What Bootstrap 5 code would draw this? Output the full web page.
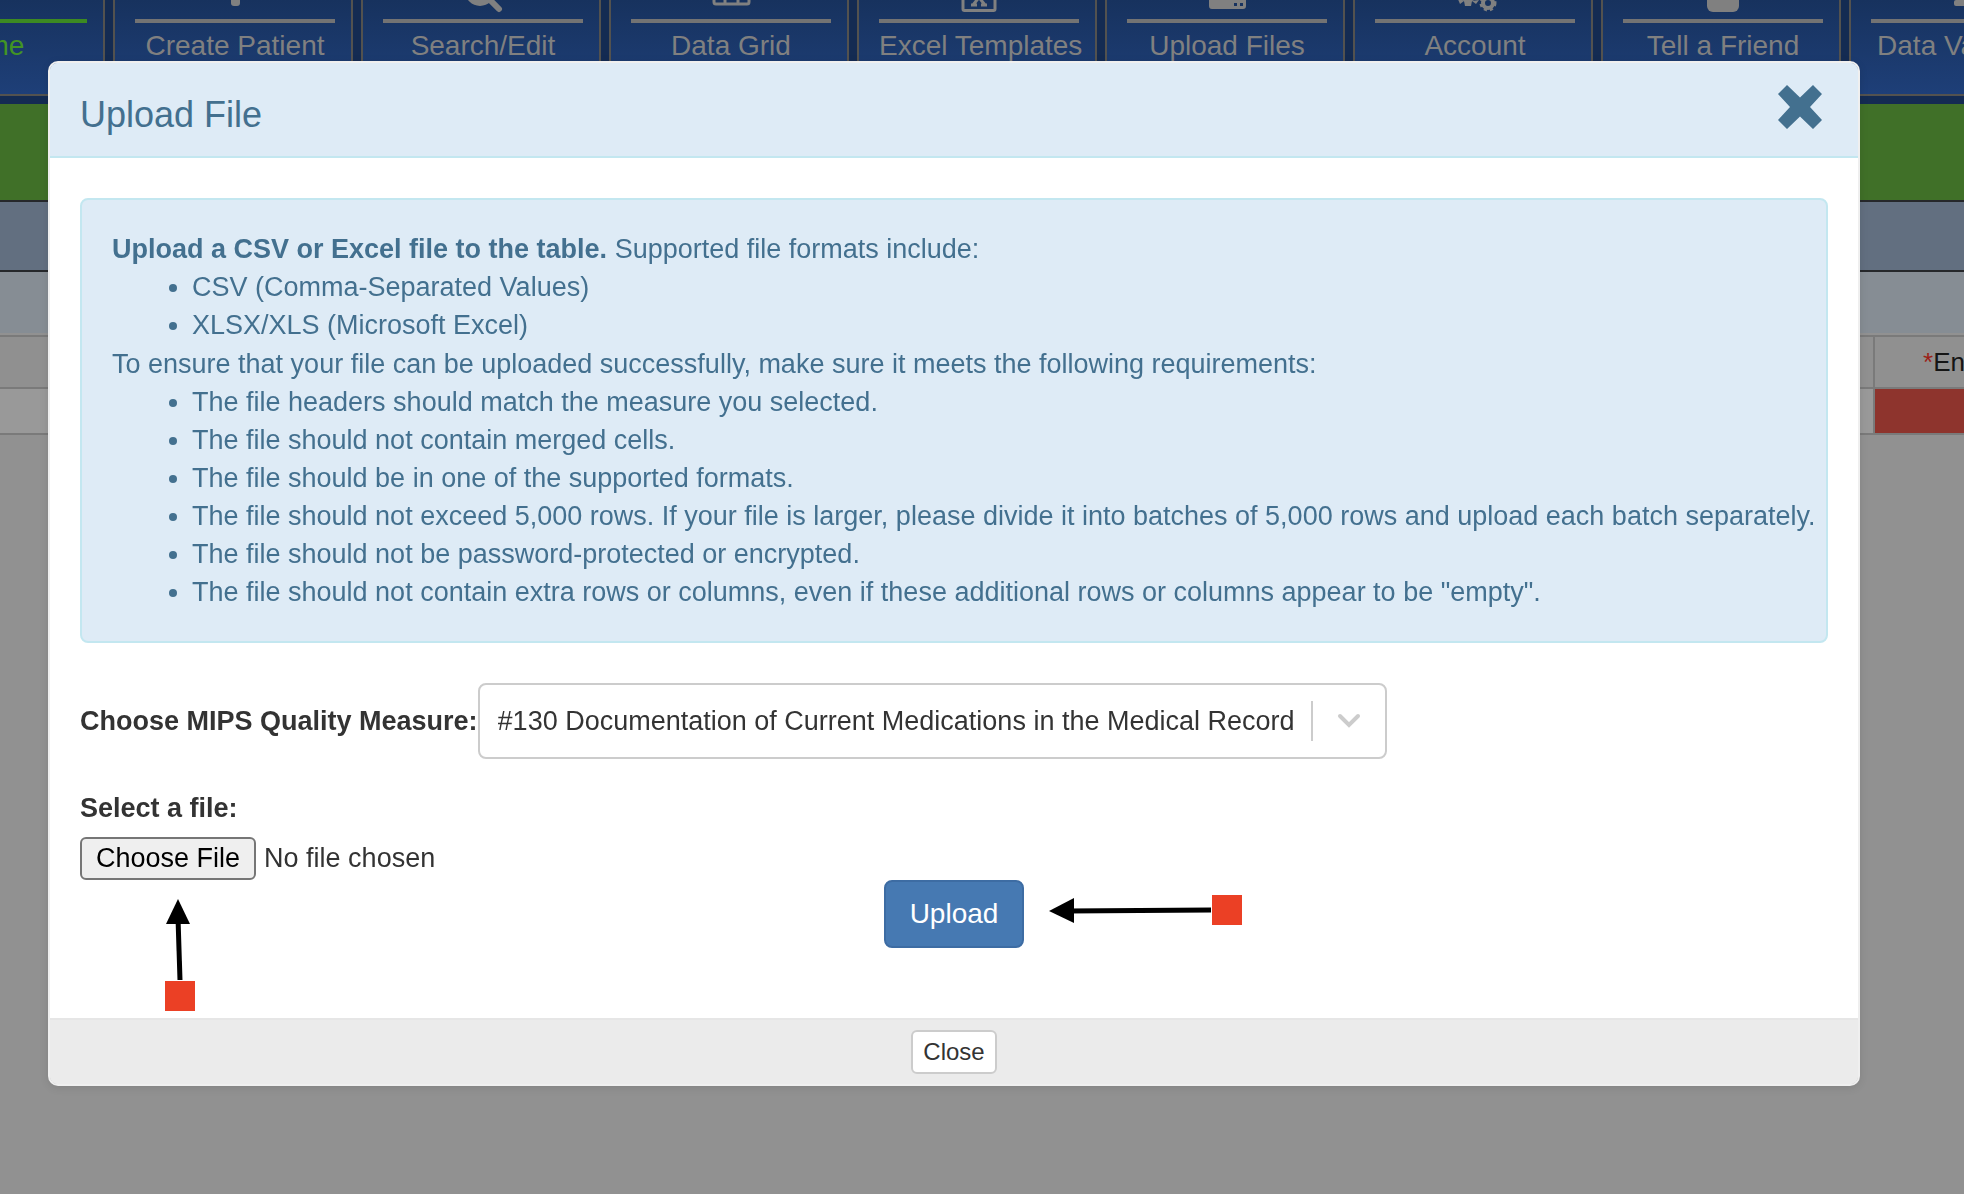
<!DOCTYPE html>
<html lang="en">
<head>
<meta charset="utf-8">
<meta name="viewport" content="width=device-width, initial-scale=1">
<title>Upload File</title>
<link href="https://cdn.jsdelivr.net/npm/bootstrap@5.3.0/dist/css/bootstrap.min.css" rel="stylesheet">
<style>
  body { font-family: "Liberation Sans", Arial, sans-serif; font-size: 27px; line-height: 38px; color: #333; background: #919191; min-height: 100vh; overflow: hidden; }

  /* dimmed page behind the dialog */
  .topnav { background: #142b52; gap: 8px; height: 104px; margin-left: -135px; overflow: hidden; }
  .tile { flex: 0 0 240px; min-width: 0; height: 96px; border: 2px solid #53524f; border-top: 0; padding: 0 16px 0 20px; background: linear-gradient(#17325e, #1e3f78); color: #808080; font-size: 28px; line-height: 36px; text-align: center; text-decoration: none; white-space: nowrap; }
  .tile svg { display: block; width: 200px; height: 19px; fill: currentColor; }
  .tile span { display: block; border-top: 4px solid #737373; padding-top: 5px; }
  .tile.current { color: #429424; }
  .tile.current span { border-color: #3c8a22; }
  .band-green { height: 96px; background: #407028; }
  .band-slate { height: 72px; background: #626f80; border-top: 2px solid #26282b; border-bottom: 2px solid #26282b; }
  .band-light { height: 61px; background: #868d94; margin-bottom: 2px; }
  .grid-data { width: calc(100% + 4px); margin-left: -2px; table-layout: fixed; border-collapse: collapse; font-size: 26px; color: #151515; }
  .grid-data th, .grid-data td { border: 2px solid #7a7a7a; padding: 0; font-weight: 400; overflow: hidden; white-space: nowrap; }
  .grid-data th { height: 52px; padding-left: 48px; background: #909090; }
  .grid-data td { height: 46px; background: #999; }
  .grid-data td.invalid { background: #8e342d; }
  .grid-data .last-col { width: 91px; }
  .req { color: #9c1f17; }

  /* dialog */
  .upload-dialog { max-width: none; margin: 61px 104px 0 48px; }
  .upload-dialog .modal-content { border: 2px solid #efefef; border-radius: 10px; box-shadow: 0 2px 8px rgba(0,0,0,.1); color: #333; }
  .upload-dialog .modal-header { background: #deebf6; border-bottom: 2px solid #c3e7f0; border-radius: 8px 8px 0 0; padding: 20px 36px 17px 30px; color: #43708f; align-items: flex-start; }
  .upload-dialog .modal-title { font-size: 36px; line-height: 49px; font-weight: 400; padding-top: 7px; }
  .close-x { border: 0; background: none; padding: 2px 0 0; line-height: 0; color: inherit; }
  .upload-dialog .modal-body { padding: 40px 30px 70px; }
  .info-box { background: #deebf6; border: 2px solid #c3e7f0; border-radius: 8px; color: #43708f; padding: 30px 8px 30px 30px; margin-bottom: 40px; }
  .info-box ul { margin: 0; padding-left: 80px; }
  .info-box ul + div { margin-top: 1px; }
  .measure { border: 2px solid #ccc; border-radius: 8px; height: 76px; }
  .measure select { appearance: none; border: 0; background: transparent; color: #333; padding: 0 16px 0 18px; height: 72px; }
  .divider { width: 2px; height: 40px; background: #ccc; }
  .file-label { margin-top: 30px; margin-bottom: 10px; }
  .file-input { display: block; height: 43px; line-height: 38px; }
  .file-input::file-selector-button { font: inherit; line-height: 35px; color: #000; background: #efefef; border: 2px solid #767676; border-radius: 6px; padding: 2px 14px; margin: 0 8px 0 0; }
  .btn-upload { font-size: 28px; line-height: 40px; padding: 12px 24px; border: 2px solid #3d6ca3; border-radius: 8px; background: #4679b2; color: #fff; }
  .upload-dialog .modal-footer { background: #ebebeb; border-top: 2px solid #e6e6e6; border-radius: 0 0 8px 8px; padding: 10px; }
  .btn-dismiss { font-size: 24px; line-height: 36px; padding: 2px 10px; margin: 0; border: 2px solid #ccc; border-radius: 6px; background: #fff; color: #333; }
  /* arrows laid over the dialog */
  .pointer-up { left: 84px; top: 61px; }
  .pointer-left { left: 164px; top: 14px; }
</style>
<script src="https://cdn.jsdelivr.net/npm/bootstrap@5.3.0/dist/js/bootstrap.bundle.min.js"></script>
</head>
<body>
<nav class="topnav d-flex">
  <a class="tile current" href="#"><svg></svg><span>Home</span></a>
  <a class="tile" href="#"><svg viewBox="0 0 200 19"><rect x="96" y="-20" width="9" height="26" rx="3"/></svg><span>Create Patient</span></a>
  <a class="tile" href="#"><svg viewBox="0 0 200 19"><circle cx="97" cy="-9" r="12" fill="none" stroke="currentColor" stroke-width="6"/><path d="M105-2l11 11" stroke="currentColor" stroke-width="6" stroke-linecap="round"/></svg><span>Search/Edit</span></a>
  <a class="tile" href="#"><svg viewBox="0 0 200 19"><path d="M83-8V2q0 2 2 2h31q2 0 2-2V-8M94-8V4M107-8V4" fill="none" stroke="currentColor" stroke-width="3"/></svg><span>Data Grid</span></a>
  <a class="tile" href="#"><svg viewBox="0 0 200 19"><path d="M84-8V9q0 1.500 1.500 1.500h29q1.500 0 1.500-1.500V-8" fill="none" stroke="currentColor" stroke-width="3"/><path d="M94 5l11-14M106 5L95-9M92 5h6M102 5h6" fill="none" stroke="currentColor" stroke-width="3"/></svg><span>Excel Templates</span></a>
  <a class="tile" href="#"><svg viewBox="0 0 200 19"><path fill-rule="evenodd" d="M82-6h37V6q0 3-3 3H85q-3 0-3-3zM107 3h3v3h-3zM113 3h3v3h-3zM96-3h9v3h-9z"/></svg><span>Upload Files</span></a>
  <a class="tile" href="#"><svg viewBox="0 0 200 19"><circle cx="93" cy="-9" r="11"/><path d="M82-3l3 7 4-3zM89 1l1 5h6l1-5zM97 1l4 3 3-4z"/><circle cx="113" cy="3" r="5" fill="none" stroke="currentColor" stroke-width="4"/><circle cx="113" cy="3" r="7" fill="none" stroke="currentColor" stroke-width="3" stroke-dasharray="3 3"/></svg><span>Account</span></a>
  <a class="tile" href="#"><svg viewBox="0 0 200 19"><rect x="84" y="-15" width="32" height="27" rx="6"/></svg><span>Tell a Friend</span></a>
  <a class="tile" href="#"><svg viewBox="0 0 200 19"><rect x="83" y="0" width="34" height="6" rx="2"/></svg><span>Data Validation</span></a>
</nav>
<main>
  <div class="band-green"></div>
  <div class="band-slate"></div>
  <div class="band-light"></div>
  <table class="grid-data">
    <tr><th></th><th class="last-col"><span class="req">*</span>Encounter</th></tr>
    <tr><td></td><td class="invalid"></td></tr>
  </table>
</main>

<div class="modal d-block" tabindex="-1" role="dialog" aria-labelledby="dialogTitle">
  <div class="modal-dialog upload-dialog">
    <div class="modal-content">
      <div class="modal-header d-flex justify-content-between">
        <h4 class="modal-title" id="dialogTitle">Upload File</h4>
        <button type="button" class="close-x" aria-label="Dismiss"><svg width="44" height="44" viewBox="0 0 44 44" fill="currentColor"><path d="M9 0L22 12.500 35 0 44 9 32 22 44 35 35 44 22 31.500 9 44 0 35 12 22 0 9z"/></svg></button>
      </div>
      <div class="modal-body">
        <div class="info-box">
          <div><strong>Upload a CSV or Excel file to the table.</strong> Supported file formats include:</div>
          <ul>
            <li>CSV (Comma-Separated Values)</li>
            <li>XLSX/XLS (Microsoft Excel)</li>
          </ul>
          <div>To ensure that your file can be uploaded successfully, make sure it meets the following requirements:</div>
          <ul>
            <li>The file headers should match the measure you selected.</li>
            <li>The file should not contain merged cells.</li>
            <li>The file should be in one of the supported formats.</li>
            <li>The file should not exceed 5,000 rows. If your file is larger, please divide it into batches of 5,000 rows and upload each batch separately.</li>
            <li>The file should not be password-protected or encrypted.</li>
            <li>The file should not contain extra rows or columns, even if these additional rows or columns appear to be "empty".</li>
          </ul>
        </div>
        <div class="d-flex align-items-center">
          <label class="fw-bold" for="measure">Choose MIPS Quality Measure:</label>
          <div class="measure d-flex align-items-center">
            <select id="measure"><option>#130 Documentation of Current Medications in the Medical Record</option></select>
            <div class="divider"></div>
            <svg class="mx-4" width="24" height="16" viewBox="0 0 24 16" fill="none" stroke="#ccc" stroke-width="4" stroke-linecap="round"><path d="M3 3l9 9 9-9"/></svg>
          </div>
        </div>
        <label class="fw-bold d-block file-label" for="file">Select a file:</label>
        <div class="position-relative">
          <input class="file-input" type="file" id="file">
          <svg class="pointer-up position-absolute" width="32" height="116" viewBox="0 0 32 116"><path d="M14 1l12 25H2z"/><path d="M14 20l2 62" stroke="#000" stroke-width="5"/><path d="M1 83h30v30H1z" fill="#eb4025"/></svg>
        </div>
        <div class="text-center">
          <div class="position-relative d-inline-block">
            <button type="button" class="btn btn-upload">Upload</button>
            <svg class="pointer-left position-absolute" width="196" height="32" viewBox="0 0 196 32"><path d="M1 17L26 4v25z"/><path d="M20 17l143-1" stroke="#000" stroke-width="5"/><path d="M164 1h30v30h-30z" fill="#eb4025"/></svg>
          </div>
        </div>
      </div>
      <div class="modal-footer justify-content-center">
        <button type="button" class="btn btn-dismiss">Close</button>
      </div>
    </div>
  </div>
</div>
</body>
</html>
